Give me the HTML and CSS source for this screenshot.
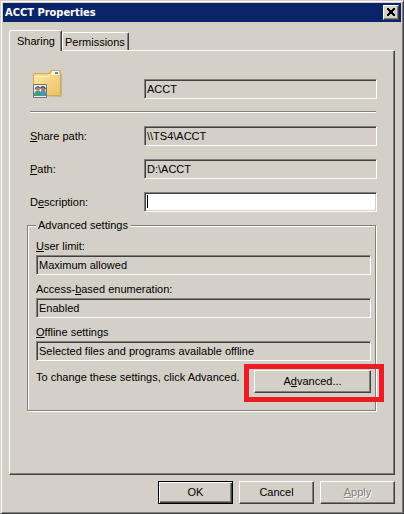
FILE: index.html
```html
<!DOCTYPE html>
<html lang="en">
<head>
    <meta charset="UTF-8">
    <meta name="viewport" content="width=device-width, initial-scale=1.0">
    <title>ACCT Properties</title>
    <link rel="stylesheet" href="styles.css">
</head>
<body>
    <div class="window">
        <header class="titlebar">
            <h1>ACCT Properties</h1>
            <button class="close" type="button" aria-label="Close">
                <svg width="8" height="8" viewBox="0 0 8 8" shape-rendering="crispEdges">
                    <path d="M0 0h2v1h1v1h2V1h1V0h2v2H7v1H6v2h1v1h1v2H6V7H5V6H3v1H2v1H0V6h1V5h1V3H1V2H0z"/>
                </svg>
            </button>
        </header>

        <div class="tabs" role="tablist">
            <button class="tab active" type="button" role="tab" aria-selected="true">Sharing</button>
            <button class="tab" type="button" role="tab" aria-selected="false">Permissions</button>
        </div>

        <main class="panel" role="tabpanel">
            <div class="row header-row">
                <svg class="folder" width="30" height="30" viewBox="0 0 30 30">
                    <defs>
                        <linearGradient id="front" x1="0" y1="0" x2="1" y2="1">
                            <stop offset="0" stop-color="#ffe6a0"/>
                            <stop offset="1" stop-color="#e8c268"/>
                        </linearGradient>
                    </defs>
                    <path d="M3 28h25l1-1V5l-1-1v23z" fill="#bdb6a6"/>
                    <path d="M0 5l1-1h15l2-3h9l1 2v23l-1 1H0z" fill="#d2a94f"/>
                    <path d="M1 5h16l2-3h7l1 2v5H1z" fill="#f3d88f"/>
                    <path d="M19 2h7v3h-7z" fill="#fff"/>
                    <path d="M22 3h3v2h-3z" fill="#4b8be5"/>
                    <path d="M1 7h15l2-2h9v21H1z" fill="url(#front)"/>
                    <path d="M1 7.500h15l2-2h9" fill="none" stroke="#fff1c0"/>
                    <path d="M.5 15.500h13v13H.5z" fill="#edf3f5" stroke="#6f747a"/>
                    <path d="M1 27c0-4 1-5 3-5h2c2 0 2 2 3 5z" fill="#3f9f78"/>
                    <path d="M7 27c0-4 1-6 3-6h1c2 0 2 3 2 6z" fill="#4a94b4"/>
                    <circle cx="5" cy="20" r="2" fill="#bc8068"/>
                    <circle cx="10" cy="20" r="2" fill="#ad7561"/>
                    <path d="M2 21c-1-4 5-5 5-2l-3-1zM7 20c0-4 6-4 6 1l-3-3z" fill="#35404b"/>
                </svg>
                <input class="field" type="text" value="ACCT" aria-label="Share name" readonly>
            </div>

            <hr>

            <div class="row">
                <label for="share-path"><u>S</u>hare path:</label>
                <input class="field" id="share-path" type="text" value="\\TS4\ACCT" readonly>
            </div>
            <div class="row">
                <label for="path"><u>P</u>ath:</label>
                <input class="field" id="path" type="text" value="D:\ACCT" readonly>
            </div>
            <div class="row">
                <label for="description">D<u>e</u>scription:</label>
                <div class="focused">
                    <input class="field editable" id="description" type="text">
                </div>
            </div>

            <fieldset>
                <legend>Advanced settings</legend>
                <div class="setting">
                    <label for="user-limit"><u>U</u>ser limit:</label>
                    <input class="field" id="user-limit" type="text" value="Maximum allowed" readonly>
                </div>
                <div class="setting">
                    <label for="enumeration">Access-<u>b</u>ased enumeration:</label>
                    <input class="field" id="enumeration" type="text" value="Enabled" readonly>
                </div>
                <div class="setting">
                    <label for="offline"><u>O</u>ffline settings</label>
                    <input class="field" id="offline" type="text" value="Selected files and programs available offline" readonly>
                </div>
                <div class="advanced">
                    <p>To change these settings, click Advanced.</p>
                    <div class="highlight">
                        <button class="btn" type="button">A<u>d</u>vanced...</button>
                    </div>
                </div>
            </fieldset>
        </main>

        <footer class="actions">
            <button class="btn default" type="button">OK</button>
            <button class="btn" type="button">Cancel</button>
            <button class="btn" type="button" disabled><u>A</u>pply</button>
        </footer>
    </div>
</body>
</html>
```
FILE: styles.css
```css
* {
    box-sizing: border-box;
}
body {
    margin: 0;
    background-color: #d4d0c8;
    color: #000;
    font: 11px/14px "Liberation Sans", Arial, sans-serif;
}
button,
input {
    font: inherit;
    color: inherit;
}
.window {
    display: flex;
    flex-direction: column;
    min-height: 100vh;
    padding: 1px;
    border: 1px solid;
    border-color: #d4d0c8 #404040 #404040 #d4d0c8;
    box-shadow: inset 1px 1px 0 #fff, inset -1px -1px 0 #808080;
}
.titlebar {
    display: flex;
    align-items: center;
    justify-content: space-between;
    height: 19px;
    margin: 1px 1px 8px;
    padding: 0 2px;
    background-color: #0a246a;
}
.titlebar h1 {
    margin: 0;
    color: #fff;
    font: bold 11px/14px "DejaVu Sans Condensed", "DejaVu Sans", sans-serif;
}
.close {
    display: flex;
    align-items: center;
    justify-content: center;
    width: 16px;
    height: 15px;
    padding: 0 1px 1px 0;
    background-color: #d4d0c8;
    border: 1px solid;
    border-color: #fff #404040 #404040 #fff;
    box-shadow: inset -1px -1px 0 #808080;
}
.close svg {
    flex: none;
}

/* tabs */
.tabs {
    display: flex;
    align-items: flex-end;
    margin: 0 7px;
}
.tab {
    height: 18px;
    padding: 0 3px 0 2px;
    background-color: #d4d0c8;
    border: 1px solid;
    border-color: #fff #404040 transparent #fff;
    border-bottom: 0;
    border-radius: 2px 2px 0 0;
    box-shadow: inset -1px 0 0 #808080;
}
.tab.active {
    z-index: 1;
    height: 21px;
    margin-bottom: -1px;
    padding: 0 6px 0 7px;
}
.panel {
    flex: 1;
    margin: 0 7px;
    padding: 18px 17px 20px;
    border: 1px solid;
    border-color: #fff #404040 #404040 #fff;
    box-shadow: inset -1px -1px 0 #808080;
}

/* fields */
.row {
    display: grid;
    grid-template-columns: 114px 1fr;
    align-items: center;
    margin-bottom: 13px;
    padding-left: 3px;
}
.header-row {
    align-items: end;
    margin-bottom: 12px;
}
.folder {
    display: block;
    margin-left: 3px;
}
.field {
    display: block;
    width: 100%;
    height: 20px;
    padding: 0 3px 1px 2px;
    background-color: #d4d0c8;
    border: 1px solid;
    border-color: #808080 #fff #fff #808080;
    border-radius: 0;
    box-shadow: inset 1px 1px 0 #404040;
    outline: 0;
}
.editable {
    background-color: #fff;
    box-shadow: inset 1px 1px 0 #404040, inset -1px -1px 0 #d4d0c8;
}
.focused {
    position: relative;
}
.focused::after {
    content: "";
    position: absolute;
    top: 3px;
    left: 3px;
    width: 1px;
    height: 13px;
    background-color: #000;
}
hr {
    height: 2px;
    margin: 0 1px 13px 3px;
    border: 0;
    border-top: 1px solid #808080;
    border-bottom: 1px solid #fff;
}

/* advanced settings */
fieldset {
    min-width: 0;
    margin: -7px 1px 0 0;
    padding: 7px 4px 17px 8px;
    border: 1px solid #808080;
    box-shadow: 1px 1px 0 #fff, inset 1px 1px 0 #fff;
}
legend {
    padding: 0 3px 0 2px;
    background-color: #d4d0c8;
}
.setting {
    margin-bottom: 7px;
}
.setting label {
    display: block;
    margin-bottom: 2px;
}
.advanced {
    display: flex;
    justify-content: space-between;
    padding-top: 2px;
}
.advanced p {
    margin: 0;
}
.highlight {
    position: relative;
}
.highlight .btn {
    width: 117px;
}
.highlight::after {
    content: "";
    position: absolute;
    inset: -6px -13px -9px -10px;
    border: 5px solid #ed1c24;
    pointer-events: none;
}

/* buttons */
.btn {
    width: 75px;
    height: 23px;
    padding: 0 0 1px;
    background-color: #d4d0c8;
    border: 1px solid;
    border-color: #fff #404040 #404040 #fff;
    box-shadow: inset -1px -1px 0 #808080;
}
.btn.default {
    border-color: #000;
    box-shadow: inset 1px 1px 0 #fff, inset -1px -1px 0 #404040, inset -2px -2px 0 #808080;
}
.btn:disabled {
    color: #808080;
    text-shadow: 1px 1px 0 #fff;
}
.actions {
    display: flex;
    justify-content: flex-end;
    gap: 6px;
    padding: 6px 7px 8px;
}
```
